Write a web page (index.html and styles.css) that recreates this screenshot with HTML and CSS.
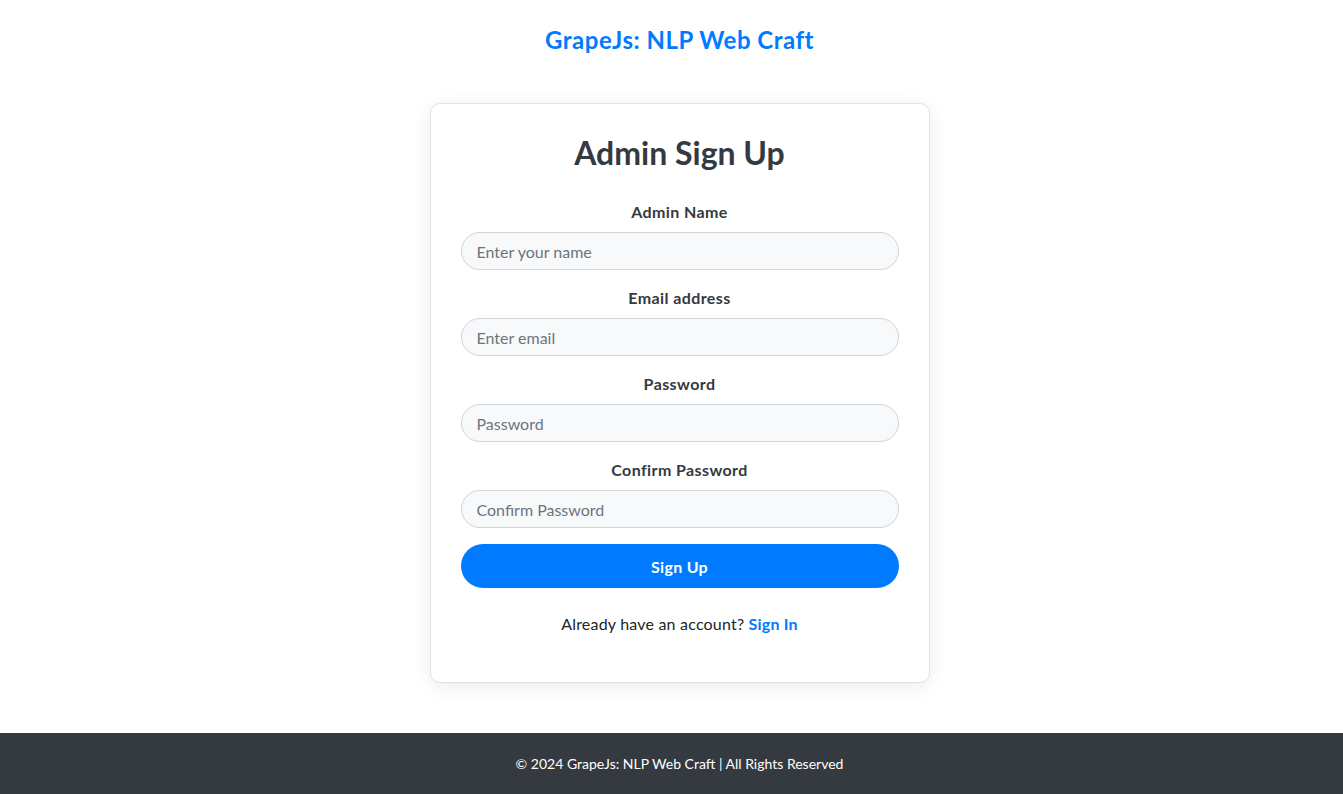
FILE: index.html
```html
<!DOCTYPE html>
<html lang="en">
<head>
<meta charset="utf-8">
<title>Admin Sign Up</title>
<link rel="stylesheet" href="styles.css">
</head>
<body>
<header class="site-header">
  <h1 class="brand">GrapeJs: NLP Web Craft</h1>
</header>
<main class="main">
  <div class="card">
    <h2 class="card-title">Admin Sign Up</h2>
    <form class="form">
      <div class="group">
        <label class="label" for="name">Admin Name</label>
        <input class="input" id="name" type="text" placeholder="Enter your name">
      </div>
      <div class="group">
        <label class="label" for="email">Email address</label>
        <input class="input" id="email" type="email" placeholder="Enter email">
      </div>
      <div class="group">
        <label class="label" for="pw">Password</label>
        <input class="input" id="pw" type="password" placeholder="Password">
      </div>
      <div class="group">
        <label class="label" for="cpw">Confirm Password</label>
        <input class="input" id="cpw" type="password" placeholder="Confirm Password">
      </div>
      <button class="btn" type="button">Sign Up</button>
    </form>
    <p class="switch">Already have an account? <a class="link" href="#">Sign In</a></p>
  </div>
</main>
<footer class="footer">
  <p class="footer-text">© 2024 GrapeJs: NLP Web Craft | All Rights Reserved</p>
</footer>
</body>
</html>
```
FILE: styles.css
```css
* { box-sizing: border-box; }
html, body { margin: 0; padding: 0; }
body {
  font-family: "Lato", "Open Sans", sans-serif;
  color: #212529;
  background: #fff;
  min-height: 794px;
  display: flex;
  flex-direction: column;
}
.site-header {
  display: flex;
  justify-content: center;
  padding-top: 25px;
  padding-left: 16px;
}
.brand {
  margin: 0;
  font-size: 24px;
  line-height: 29px;
  font-weight: 700;
  letter-spacing: 0.5px;
  color: #007bff;
}
.main {
  flex: 1;
  display: flex;
  justify-content: center;
  align-items: flex-start;
  padding-top: 49px;
  padding-left: 16px;
}
.card {
  width: 500px;
  background: #fff;
  border: 1px solid #dfe1e5;
  border-radius: 10px;
  box-shadow: 0 4px 20px rgba(0,0,0,0.08);
  padding: 30px 30px 30px;
  text-align: center;
}
.card-title {
  margin: 0 0 28px;
  font-size: 32px;
  line-height: 38px;
  font-weight: 700;
  color: #343a40;
}
.form { display: flex; flex-direction: column; }
.group {
  display: flex;
  flex-direction: column;
  align-items: center;
  margin-bottom: 16px;
}
.label {
  font-size: 16px;
  line-height: 24px;
  font-weight: 700;
  letter-spacing: 0.4px;
  color: #343a40;
  margin-bottom: 8px;
}
.input {
  width: 100%;
  height: 38px;
  border: 1px solid #ced4da;
  border-radius: 20px;
  background: #f8f9fa;
  padding: 0 15px;
  font-family: inherit;
  font-size: 16px;
  color: #495057;
}
.input::placeholder { color: #6c757d; }
.btn {
  height: 44px;
  border: none;
  border-radius: 22px;
  background: #007bff;
  color: #fff;
  font-family: inherit;
  font-size: 16px;
  font-weight: 700;
  letter-spacing: 0.3px;
}
.switch {
  margin: 24px 0 16px;
  font-size: 16px;
  line-height: 24px;
  letter-spacing: 0.2px;
  color: #212529;
}
.link {
  color: #007bff;
  font-weight: 700;
  text-decoration: none;
}
.footer {
  margin-top: 50px;
  background: #343a40;
  height: 61px;
  display: flex;
  align-items: center;
  justify-content: center;
  padding-left: 16px;
}
.footer-text {
  margin: 0;
  color: #fff;
  font-size: 14px;
  line-height: 21px;
}
```
